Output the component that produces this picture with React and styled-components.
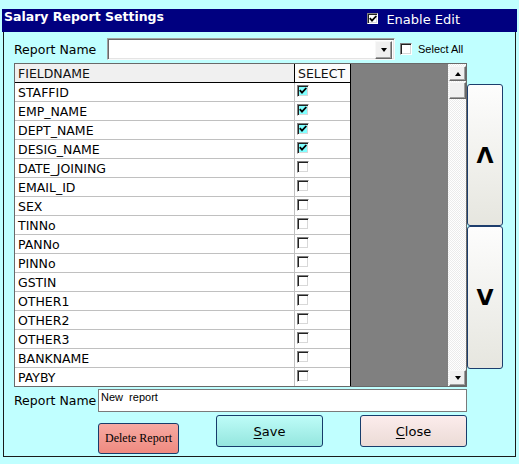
import React from "react";
import styled, { createGlobalStyle, css } from "styled-components";

const GlobalStyle = createGlobalStyle`
  html, body {
    margin: 0;
    padding: 0;
    background: #c0ffff;
  }
  body {
    font-family: "DejaVu Sans", Verdana, sans-serif;
  }
`;

const fields = [
  ["STAFFID", true],
  ["EMP_NAME", true],
  ["DEPT_NAME", true],
  ["DESIG_NAME", true],
  ["DATE_JOINING", false],
  ["EMAIL_ID", false],
  ["SEX", false],
  ["TINNo", false],
  ["PANNo", false],
  ["PINNo", false],
  ["GSTIN", false],
  ["OTHER1", false],
  ["OTHER2", false],
  ["OTHER3", false],
  ["BANKNAME", false],
  ["PAYBY", false],
];

const Page = styled.div`
  width: 519px;
  height: 464px;
  padding-top: 9px;
  padding-left: 2px;
  box-sizing: border-box;
`;

const Window = styled.div`
  width: 515px;
  height: 449px;
  display: flex;
  flex-direction: column;
`;

const TitleBar = styled.div`
  height: 23px;
  background: #000080;
  display: flex;
  justify-content: space-between;
  align-items: flex-start;
  color: #fff;
`;

const Title = styled.div`
  font-weight: bold;
  font-size: 12.5px;
  line-height: 13px;
  padding: 1px 0 0 2px;
`;

const EnableEdit = styled.label`
  display: flex;
  align-items: flex-start;
  gap: 8px;
  margin-right: 57px;
  padding-top: 4px;
  font-size: 13px;
`;

const EnableText = styled.span`
  line-height: 15px;
  margin-top: -1px;
`;

const Body = styled.div`
  flex: 1;
  margin: 0 1px 1px;
  border: 1px solid #1a1a1a;
  border-top: none;
  padding: 6px 0 0 10px;
  display: flex;
  flex-direction: column;
`;

const Row = styled.div`
  display: flex;
  align-items: ${(p) => p.$align || "center"};
  margin-top: ${(p) => p.$top || 0}px;
`;

const Label = styled.span`
  width: ${(p) => p.$width}px;
  font-size: 12.5px;
  color: #000;
`;

const Combo = styled.div`
  width: 288px;
  height: 22px;
  box-sizing: border-box;
  background: #fff;
  border: 1px solid;
  border-color: #a0a0a0 #f8f8f8 #f8f8f8 #a0a0a0;
  box-shadow: inset 1px 1px 0 #696969, inset -1px -1px 0 #e4e4e4;
  display: flex;
  justify-content: flex-end;
  padding: 2px;
`;

const raised = css`
  background: #f0f0f0;
  box-sizing: border-box;
  border: 1px solid;
  border-color: #f8f8f8 #696969 #696969 #f8f8f8;
  box-shadow: inset -1px -1px 0 #a0a0a0;
  display: flex;
  align-items: center;
  justify-content: center;
`;

const ComboButton = styled.div`
  ${raised};
  width: 17px;
  height: 18px;
`;

const Triangle = styled.span`
  width: 0;
  height: 0;
  border-left: 3.5px solid transparent;
  border-right: 3.5px solid transparent;
  ${(p) =>
    p.$up
      ? "border-bottom: 4px solid #000;"
      : "border-top: 4px solid #000;"}
`;

const Box = styled.span`
  width: ${(p) => p.$size}px;
  height: ${(p) => p.$size}px;
  box-sizing: border-box;
  flex: none;
  border: 1px solid;
  border-color: #808080 #ffffff #ffffff #808080;
  box-shadow: inset 1px 1px 0 #222, inset -1px -1px 0 #d8d8d8;
  background: ${(p) => p.$fill || "#fff"};
  display: flex;
  align-items: center;
  justify-content: center;
`;

const SmallText = styled.span`
  font-family: "Liberation Sans", Arial, sans-serif;
  font-size: 11px;
  color: #000;
`;

const Grid = styled.div`
  width: 453px;
  height: 324px;
  box-sizing: border-box;
  border: 1px solid #696969;
  display: flex;
  overflow: hidden;
`;

const Table = styled.div`
  width: 336px;
  background: #fff;
  border-right: 1px solid #000;
  box-sizing: border-box;
  display: flex;
  flex-direction: column;
`;

const HeadRow = styled.div`
  display: flex;
  height: 19px;
  flex: none;
  box-sizing: border-box;
  border-bottom: 1px solid #000;
`;

const HeadCell = styled.div`
  width: ${(p) => p.$width}px;
  box-sizing: border-box;
  background: ${(p) => p.$bg};
  border-right: ${(p) => (p.$line ? "1px solid #000" : "none")};
  font-size: 12.5px;
  line-height: 19px;
  padding-left: 3px;
  color: #111;
`;

const DataRow = styled.div`
  display: flex;
  height: 19px;
  flex: none;
  box-sizing: border-box;
  border-bottom: 1px solid #c0c0c0;
`;

const NameCell = styled.div`
  width: 280px;
  box-sizing: border-box;
  border-right: 1px solid #c0c0c0;
  font-size: 12.5px;
  line-height: 19px;
  padding-left: 3px;
  color: #000;
`;

const CheckCell = styled.div`
  flex: 1;
  padding: 2px 0 0 2px;
`;

const Filler = styled.div`
  flex: 1;
  background: #808080;
`;

const ScrollBar = styled.div`
  width: 18px;
  display: flex;
  flex-direction: column;
  justify-content: space-between;
  background: repeating-conic-gradient(#ffffff 0 25%, #ebebeb 0 50%) 0 0 / 2px 2px;
  padding: 1px 0 0 1px;
  box-sizing: border-box;
`;

const ScrollButton = styled.div`
  ${raised};
  width: 17px;
  height: ${(p) => p.$h || 16}px;
`;

const ScrollTrack = styled.div`
  flex: 1;
  padding-top: 1px;
`;

const SideColumn = styled.div`
  width: 36px;
  padding-top: 21px;
  display: flex;
  flex-direction: column;
`;

const MoveButton = styled.button`
  height: ${(p) => p.$h}px;
  width: 36px;
  box-sizing: border-box;
  border: 1px solid #1d3e6d;
  border-radius: 3px;
  background: linear-gradient(#fdfdfd, #e6e6df);
  font-family: "DejaVu Sans", sans-serif;
  font-weight: bold;
  font-size: 22px;
  color: #000;
  padding: 0;
`;

const TextBox = styled.div`
  width: 369px;
  height: 23px;
  box-sizing: border-box;
  background: #fff;
  border: 1px solid #7a7a7a;
  padding: 1px 2px;
  font-family: "Liberation Sans", Arial, sans-serif;
  font-size: 11px;
  line-height: 13px;
  white-space: pre;
`;

const variants = {
  delete: "linear-gradient(#f7aaa2, #ef8a80)",
  save: "linear-gradient(#befcf8, #94e6de)",
  close: "linear-gradient(#fcecec, #ebdbd6)",
};

const ActionButton = styled.button`
  width: ${(p) => p.$width}px;
  height: ${(p) => p.$h || 32}px;
  margin: ${(p) => p.$margin};
  box-sizing: border-box;
  border: 1px solid #173c6b;
  border-radius: 3px;
  background: ${(p) => variants[p.$kind]};
  font-family: ${(p) =>
    p.$serif
      ? '"Liberation Serif", "Times New Roman", serif'
      : '"DejaVu Sans", Verdana, sans-serif'};
  font-size: ${(p) => (p.$serif ? 12 : 13)}px;
  color: #000;
  padding: 0;
  u {
    text-decoration: underline;
    text-underline-offset: 2px;
  }
`;

const CheckMark = () => (
  <svg width="8" height="8" viewBox="0 0 8 8">
    <path d="M0.8 3.2 L3 5.6 L7.3 1" fill="none" stroke="#000" strokeWidth="1.8" />
  </svg>
);

export default function App() {
  return (
    <Page>
      <GlobalStyle />
      <Window>
        <TitleBar>
          <Title>Salary Report Settings</Title>
          <EnableEdit>
            <Box $size={11}>
              <CheckMark />
            </Box>
            <EnableText>Enable Edit</EnableText>
          </EnableEdit>
        </TitleBar>
        <Body>
          <Row>
            <Label $width={93}>Report Name</Label>
            <Combo>
              <ComboButton>
                <Triangle />
              </ComboButton>
            </Combo>
            <Box $size={12} style={{ marginLeft: 5, marginRight: 6 }} />
            <SmallText>Select All</SmallText>
          </Row>
          <Row $top={3} $align="flex-start">
            <Grid>
              <Table>
                <HeadRow>
                  <HeadCell $width={280} $bg="#f0f0f0" $line>
                    FIELDNAME
                  </HeadCell>
                  <HeadCell $width={55} $bg="#fcfcfc">
                    SELECT
                  </HeadCell>
                </HeadRow>
                {fields.map(([name, checked]) => (
                  <DataRow key={name}>
                    <NameCell>{name}</NameCell>
                    <CheckCell>
                      <Box $size={12} $fill={checked ? "#80ffff" : "#fff"}>
                        {checked && <CheckMark />}
                      </Box>
                    </CheckCell>
                  </DataRow>
                ))}
              </Table>
              <Filler />
              <ScrollBar>
                <ScrollTrack>
                  <ScrollButton $h={15}>
                    <Triangle $up />
                  </ScrollButton>
                  <ScrollButton $h={17} style={{ marginTop: 1 }} />
                </ScrollTrack>
                <ScrollButton $h={16}>
                  <Triangle />
                </ScrollButton>
              </ScrollBar>
            </Grid>
            <SideColumn>
              <MoveButton $h={142}>Λ</MoveButton>
              <MoveButton $h={143}>V</MoveButton>
            </SideColumn>
          </Row>
          <Row $top={2}>
            <Label $width={84}>Report Name</Label>
            <TextBox>New  report</TextBox>
          </Row>
          <Row $top={3} $align="flex-start">
            <ActionButton $kind="delete" $serif $width={81} $h={31} $margin="8px 0 0 84px">
              Delete Report
            </ActionButton>
            <ActionButton $kind="save" $width={107} $margin="0 0 0 37px">
              <u>S</u>ave
            </ActionButton>
            <ActionButton $kind="close" $width={107} $margin="0 0 0 37px">
              <u>C</u>lose
            </ActionButton>
          </Row>
        </Body>
      </Window>
    </Page>
  );
}
